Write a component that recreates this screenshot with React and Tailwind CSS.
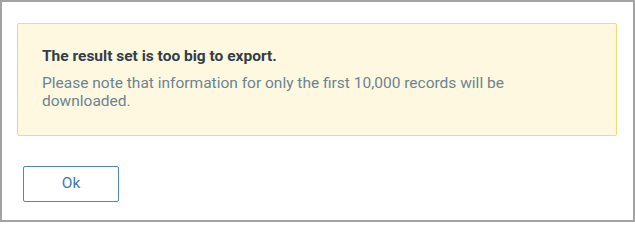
export default function App() {
  return (
    <div className="w-[635px] h-[222px] border-2 border-[#a3a3a3] bg-white font-['Roboto',sans-serif]">
      <div className="ml-[15px] mt-[21px] w-[600px] h-[113px] rounded-[2px] border border-[#f3dc6c] bg-[#fef8e0] px-6 pt-[22px]">
        <p className="text-[15.5px] leading-5 font-bold text-[#333e48]">The result set is too big to export.</p>
        <p className="mt-2 text-[15.5px] leading-[18px] text-[#6b8494]">
          Please note that information for only the first 10,000 records will be downloaded.
        </p>
      </div>
      <div className="mt-[30px] ml-[21px]">
        <button className="w-[96px] h-[36px] rounded-[2px] border border-[#4a86c8] bg-white text-[15.5px] text-[#3b79c0]">
          Ok
        </button>
      </div>
    </div>
  )
}
